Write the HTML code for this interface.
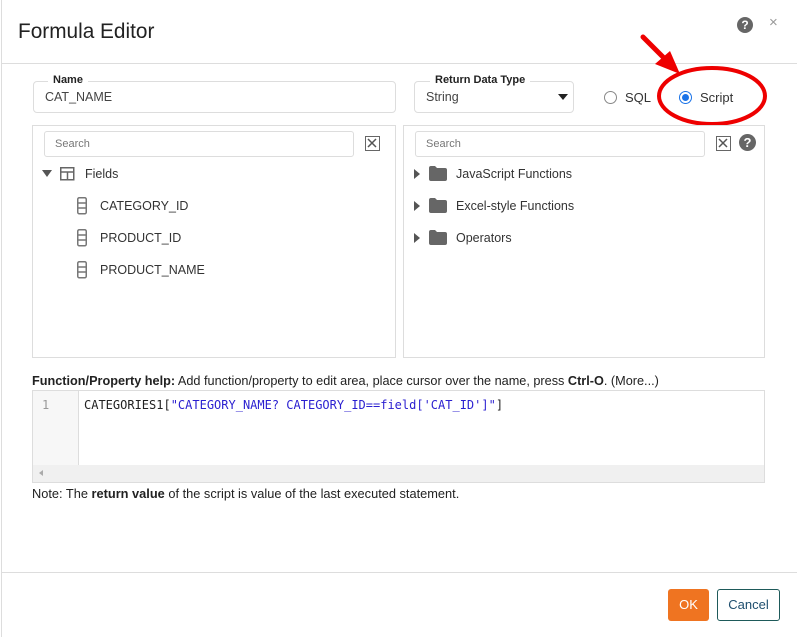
<!DOCTYPE html>
<html><head><style>
*{box-sizing:border-box;margin:0;padding:0}
body{width:797px;height:637px;background:#fff;font-family:"Liberation Sans",sans-serif;color:#333;position:relative;overflow:hidden;font-size:13px}
.a{position:absolute}
.box{position:absolute;border:1px solid #ddd;border-radius:4px}
.lbl{position:absolute;background:#fff;font-weight:bold;font-size:11px;color:#222;padding:0 5px}
.panel{position:absolute;border:1px solid #ddd}
.search{position:absolute;border:1px solid #ddd;border-radius:3px;height:26px;font-size:11px;color:#777;padding:6px 10px}
.xb{position:absolute;width:15px;height:15px;border:1.5px solid #666;}
.it{position:absolute;font-size:12.5px;color:#333}
</style></head><body>
<div class="a" style="left:1px;top:0;width:1px;height:637px;background:#ddd"></div>
<div class="a" style="left:18px;top:20px;font-size:20.8px;color:#222">Formula Editor</div>
<div class="a" style="left:737px;top:17px;width:16px;height:16px;border-radius:50%;background:#666;color:#fff;font-weight:bold;font-size:12px;text-align:center;line-height:16px">?</div>
<div class="a" style="left:769px;top:14px;font-size:15px;color:#999">×</div>
<div class="a" style="left:2px;top:63px;width:795px;height:1px;background:#ddd"></div>

<div class="box" style="left:33px;top:81px;width:363px;height:32px"></div>
<div class="lbl" style="left:48px;top:74px">Name</div>
<div class="a" style="left:45px;top:90px;font-size:12.5px;color:#444">CAT_NAME</div>

<div class="box" style="left:414px;top:81px;width:160px;height:32px"></div>
<div class="lbl" style="left:430px;top:74px">Return Data Type</div>
<div class="a" style="left:426px;top:90px;font-size:12.5px;color:#444">String</div>
<div class="a" style="left:558px;top:94px;border-left:5px solid transparent;border-right:5px solid transparent;border-top:6px solid #222"></div>

<div class="a" style="left:604px;top:91px;width:13px;height:13px;border:1px solid #888;border-radius:50%"></div>
<div class="a" style="left:625px;top:90px;font-size:13px">SQL</div>
<div class="a" style="left:679px;top:91px;width:13px;height:13px;border:1px solid #1a73e8;border-radius:50%"><div style="margin:2px;width:7px;height:7px;border-radius:50%;background:#1a73e8"></div></div>
<div class="a" style="left:700px;top:90px;font-size:13px">Script</div>
<svg class="a" style="left:0;top:0" width="797" height="140">
<ellipse cx="712" cy="96" rx="53" ry="28" fill="none" stroke="#e00" stroke-width="4"/>
<line x1="643" y1="37" x2="668" y2="62" stroke="#e00" stroke-width="5" stroke-linecap="round"/>
<polygon points="680,74 655,64 670,51" fill="#e00"/>
</svg>

<div class="panel" style="left:32px;top:125px;width:364px;height:233px"></div>
<div class="search" style="left:44px;top:131px;width:310px">Search</div>
<div class="xb" style="left:365px;top:136px"><svg width="12" height="12" style="position:absolute;left:0;top:0"><path d="M2 2L10 10M10 2L2 10" stroke="#555" stroke-width="1.5"/></svg></div>
<div class="a" style="left:42px;top:170px;border-left:5px solid transparent;border-right:5px solid transparent;border-top:7px solid #555"></div>
<svg class="a" style="left:60px;top:167px" width="15" height="14"><rect x="0.75" y="0.75" width="13" height="12" fill="none" stroke="#666" stroke-width="1.5"/><path d="M1 5H14M7.5 5V13" stroke="#666" stroke-width="1.5"/></svg>
<div class="it" style="left:85px;top:167px">Fields</div>
<svg class="a" style="left:77px;top:197px" width="10" height="18"><rect x="0.75" y="0.75" width="8.5" height="16" rx="1.5" fill="none" stroke="#777" stroke-width="1.5"/><path d="M1 6H9M1 11H9" stroke="#777" stroke-width="1.5"/></svg>
<div class="it" style="left:100px;top:199px">CATEGORY_ID</div>
<svg class="a" style="left:77px;top:229px" width="10" height="18"><rect x="0.75" y="0.75" width="8.5" height="16" rx="1.5" fill="none" stroke="#777" stroke-width="1.5"/><path d="M1 6H9M1 11H9" stroke="#777" stroke-width="1.5"/></svg>
<div class="it" style="left:100px;top:231px">PRODUCT_ID</div>
<svg class="a" style="left:77px;top:261px" width="10" height="18"><rect x="0.75" y="0.75" width="8.5" height="16" rx="1.5" fill="none" stroke="#777" stroke-width="1.5"/><path d="M1 6H9M1 11H9" stroke="#777" stroke-width="1.5"/></svg>
<div class="it" style="left:100px;top:263px">PRODUCT_NAME</div>

<div class="panel" style="left:403px;top:125px;width:362px;height:233px"></div>
<div class="search" style="left:415px;top:131px;width:290px">Search</div>
<div class="xb" style="left:716px;top:136px"><svg width="12" height="12" style="position:absolute;left:0;top:0"><path d="M2 2L10 10M10 2L2 10" stroke="#555" stroke-width="1.5"/></svg></div>
<div class="a" style="left:739px;top:134px;width:17px;height:17px;border-radius:50%;background:#666;color:#fff;font-weight:bold;font-size:13px;text-align:center;line-height:17px">?</div>
<div class="a" style="left:414px;top:169px;border-top:5px solid transparent;border-bottom:5px solid transparent;border-left:6px solid #555"></div>
<svg class="a" style="left:429px;top:166px" width="18" height="15"><path d="M0 2Q0 0 2 0H6L8 2H16Q18 2 18 4V13Q18 15 16 15H2Q0 15 0 13Z" fill="#666"/></svg>
<div class="it" style="left:456px;top:167px">JavaScript Functions</div>
<div class="a" style="left:414px;top:201px;border-top:5px solid transparent;border-bottom:5px solid transparent;border-left:6px solid #555"></div>
<svg class="a" style="left:429px;top:198px" width="18" height="15"><path d="M0 2Q0 0 2 0H6L8 2H16Q18 2 18 4V13Q18 15 16 15H2Q0 15 0 13Z" fill="#666"/></svg>
<div class="it" style="left:456px;top:199px">Excel-style Functions</div>
<div class="a" style="left:414px;top:233px;border-top:5px solid transparent;border-bottom:5px solid transparent;border-left:6px solid #555"></div>
<svg class="a" style="left:429px;top:230px" width="18" height="15"><path d="M0 2Q0 0 2 0H6L8 2H16Q18 2 18 4V13Q18 15 16 15H2Q0 15 0 13Z" fill="#666"/></svg>
<div class="it" style="left:456px;top:231px">Operators</div>

<div class="a" style="left:32px;top:374px;font-size:12.7px;color:#222;white-space:nowrap"><b>Function/Property help:</b> Add function/property to edit area, place cursor over the name, press <b>Ctrl-O</b>. (More...)</div>
<div class="a" style="left:32px;top:390px;width:733px;height:93px;border:1px solid #ddd;background:#fff"></div>
<div class="a" style="left:33px;top:391px;width:46px;height:74px;background:#f7f7f7;border-right:1px solid #ddd"></div>
<div class="a" style="left:42px;top:398px;font-family:'DejaVu Sans Mono',monospace;font-size:12px;color:#999">1</div>
<div class="a" style="left:84px;top:398px;font-family:'DejaVu Sans Mono',monospace;font-size:12px;color:#222;white-space:nowrap">CATEGORIES1[<span style="color:#2a1fd0">"CATEGORY_NAME? CATEGORY_ID==field['CAT_ID']"</span>]</div>
<div class="a" style="left:33px;top:465px;width:731px;height:17px;background:#f0f0f0"></div>
<div class="a" style="left:39px;top:470px;border-top:3px solid transparent;border-bottom:3px solid transparent;border-right:4px solid #aaa"></div>
<div class="a" style="left:32px;top:486px;font-size:12.8px;color:#222;white-space:nowrap">Note: The <b>return value</b> of the script is value of the last executed statement.</div>

<div class="a" style="left:2px;top:572px;width:795px;height:1px;background:#ddd"></div>
<div class="a" style="left:668px;top:589px;width:41px;height:32px;background:#ef7421;border-radius:3px;color:#fff;font-size:13px;text-align:center;line-height:32px">OK</div>
<div class="a" style="left:717px;top:589px;width:63px;height:32px;border:1px solid #1e5a5a;border-radius:3px;color:#1e4e6e;font-size:13px;text-align:center;line-height:30px">Cancel</div>
</body></html>
